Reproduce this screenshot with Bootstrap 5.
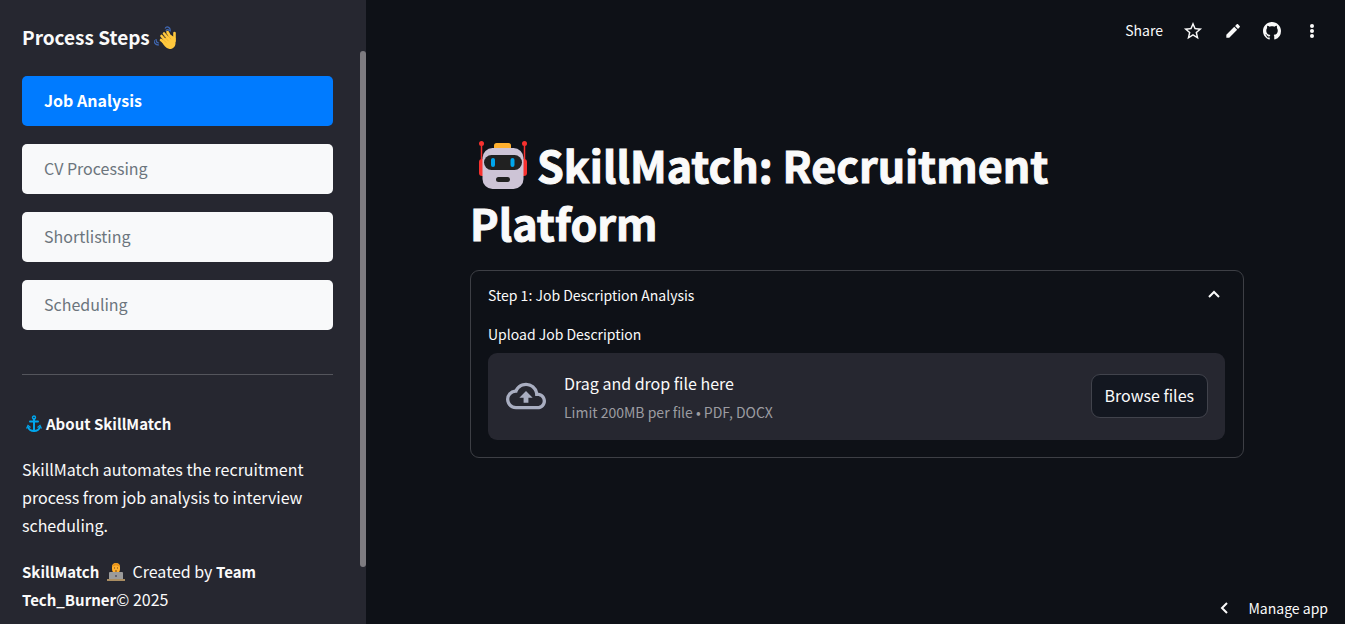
<!DOCTYPE html>
<html lang="en">
<head>
<meta charset="utf-8">
<meta name="viewport" content="width=device-width, initial-scale=1">
<title>SkillMatch: Recruitment Platform</title>
<link href="https://cdn.jsdelivr.net/npm/bootstrap@5.3.0/dist/css/bootstrap.min.css" rel="stylesheet">
<style>
body { background: #0e1117; color: #fafafa; font-family: "Noto Sans CJK JP", "Noto Sans", sans-serif; font-size: 16px; line-height: 28px; }
.side { flex: 0 0 366px; background: #262730; padding: 23px 33px 6px 22px; }
.side h2 { font-size: 19px; line-height: 28px; font-weight: 700; margin-bottom: 25px; }
.side h2 svg { vertical-align: -5px; }
.side p { margin-bottom: 18px; }
.side p svg { vertical-align: -3px; }
.side hr { margin: 44px 0 34px; border-color: #54555c; opacity: 1; }
.side strong { font-weight: 700; font-size: 15px; line-height: 20px; }
.thumb { top: 51px; bottom: 57px; width: 6px; background: #7d7b80; border-radius: 3px; }
.steps { gap: 18px; }
.step { height: 50px; border: 0; border-radius: 5px; background: #f8f9fa; color: #6c757d; padding: 0 22px 2px; }
.step.active { background: #007bff; color: #fff; font-weight: 700; }
.tools { gap: 20px; padding: 20px 24px 0; height: 42px; }
.tools, .small-text { font-size: 14px; line-height: 22px; }
.plain { border: 0; background: none; color: inherit; padding: 0; }
.tools .plain:first-child { padding-bottom: 2px; }
.content-area { padding: 93px 101px 0 104px; }
h1 { font-size: 43px; line-height: 58px; font-weight: 700; margin-bottom: 19px; -webkit-text-stroke: 1px #fafafa; }
h1 .robot { margin: 0 9px 0 8px; vertical-align: -7px; -webkit-text-stroke: 0; }
.panel { border: 1px solid #3d3f45; border-radius: 9px; padding: 13px 18px 17px 17px; }
.toggle { margin-bottom: 17px; padding-right: 1px; }
.drop { background: #262730; border-radius: 9px; height: 87px; padding: 0 17px 1px 18px; gap: 18px; margin-top: 8px; }
.drop-text { gap: 4px; padding-bottom: 1px; }
.muted { color: #9c9ca1; }
.browse { height: 44px; border: 1px solid #41434c; border-radius: 9px; background: #131720; color: #fafafa; padding: 0 13px 2px; }
.manage { gap: 18px; padding: 0 17px 5px; }
</style>
</head>
<body>
<div class="d-flex min-vh-100">
  <aside class="side position-relative">
    <h2>Process Steps <svg width="24" height="24" viewBox="1 0 24 24" aria-hidden="true"><g fill="none" stroke="#4169b5" stroke-width="1.2"><path d="M12 2.500c2-3 6-1 5 3M13 5c0-2 3-2 3 0M1 14c0 3 2 5 5 5M3 13c0 3 1 4 3 4"/></g><path d="M8.500 10l6 7M11 7.500l6 7M14.500 6l4 7M8 14l6 5M21.500 7v8" stroke="#ffc83d" stroke-width="2.600" stroke-linecap="round"/><path d="M9 14l9-5 4.500 3v5c0 4-3 6-6 6-4-1-6-4-7.500-7z" fill="#ffc83d"/><path d="M9.500 11l5 5.500M12 8.500l5 6M8.500 14.500l4 3.500" stroke="#e5a22b" stroke-width=".6" transform="translate(1 -1.300)"/></svg></h2>
    <nav class="steps d-flex flex-column" aria-label="Process steps">
      <button type="button" class="step active text-start">Job Analysis</button>
      <button type="button" class="step text-start">CV Processing</button>
      <button type="button" class="step text-start">Shortlisting</button>
      <button type="button" class="step text-start">Scheduling</button>
    </nav>
    <hr>
    <p><svg class="ms-1 me-1" width="16" height="18" viewBox="0 0 16 18" fill="none" stroke="#00a6ed" stroke-width="2" aria-hidden="true"><circle cx="8" cy="2.500" r="1.500" stroke-width="1.400"/><path d="M8 4v12M4 6.500h8" stroke-linecap="round"/><path d="M2 12c1 3 3 4 6 4s5-1 6-4"/><path d="M.5 13.500L2 10.500l2.500 2M15.500 13.500L14 10.500l-2.500 2" stroke-width="1.200"/></svg><strong>About SkillMatch</strong></p>
    <p>SkillMatch automates the recruitment process from job analysis to interview scheduling.</p>
    <p class="mb-0"><strong>SkillMatch</strong> <svg class="ms-1 me-1" width="18" height="18" viewBox="0 0 18 18" aria-hidden="true"><path d="M3 17c0-6 2-7 6-7s6 1 6 7z" fill="#e9b949"/><rect x="5" y="0" width="8" height="10" rx="4" fill="#ffb02e"/><path d="M5 4c1-5 7-5 8 0-3-2-5-2-8 0z" fill="#e89218"/><path d="M7 5h1M10 5h1M8 8h2" stroke="#704216"/><rect x="2" y="9" width="14" height="8" rx="1" fill="#9b9b9b"/><rect x="0" y="16" width="18" height="2" fill="#a98d62"/><circle cx="9" cy="13" r="1" fill="#55505f"/></svg> Created by <strong>Team Tech_Burner</strong>© 2025</p>
    <div class="thumb position-absolute end-0"></div>
  </aside>
  <div class="flex-grow-1 d-flex flex-column">
    <header class="tools d-flex justify-content-end align-items-center">
      <button type="button" class="plain">Share</button>
      <button type="button" class="plain d-flex" aria-label="Favorite"><svg width="20" height="20" viewBox="1 1 22 22" fill="currentColor"><path d="M22 9.240l-7.190-.62L12 2 9.190 8.630 2 9.240l5.460 4.730L5.820 21 12 17.270 18.180 21l-1.630-7.030L22 9.240zM12 15.400l-3.760 2.270 1-4.280-3.320-2.880 4.380-.38L12 6.100l1.710 4.040 4.380.38-3.320 2.880 1 4.280L12 15.400z"/></svg></button>
      <button type="button" class="plain d-flex" aria-label="Edit"><svg width="20" height="20" viewBox="0 0 24 24" fill="currentColor"><path d="M4 16.500V20h3.500L17 10.500 13.500 7zM20 7.500c.5-.5.5-1 0-1.500l-2-2c-.5-.5-1-.5-1.500 0l-2 2L18 9.500z"/></svg></button>
      <button type="button" class="plain d-flex" aria-label="GitHub"><svg width="18" height="18" viewBox="0 0 16 16" fill="currentColor"><path d="M8 0C3.580 0 0 3.580 0 8c0 3.540 2.290 6.530 5.470 7.590.4.070.55-.17.55-.38 0-.19-.01-.82-.01-1.490-2.010.37-2.530-.49-2.690-.94-.09-.23-.48-.94-.82-1.130-.28-.15-.68-.52-.01-.53.63-.01 1.080.58 1.230.82.72 1.210 1.870.87 2.330.66.07-.52.28-.87.51-1.070-1.780-.2-3.640-.89-3.640-3.950 0-.87.31-1.590.82-2.150-.08-.2-.36-1.020.08-2.120 0 0 .67-.21 2.200.82.64-.18 1.320-.27 2-.27s1.360.09 2 .27c1.530-1.040 2.200-.82 2.200-.82.44 1.100.16 1.920.08 2.120.51.56.82 1.270.82 2.150 0 3.070-1.870 3.750-3.650 3.950.29.25.54.73.54 1.480 0 1.070-.01 1.930-.01 2.200 0 .21.15.46.55.38A8.010 8.010 0 0016 8c0-4.420-3.580-8-8-8z"/></svg></button>
      <button type="button" class="plain d-flex" aria-label="More options"><svg width="20" height="20" viewBox="0 0 20 20" fill="currentColor"><circle cx="11" cy="5" r="2"/><circle cx="11" cy="10" r="2"/><circle cx="11" cy="15" r="2"/></svg></button>
    </header>
    <main class="content-area flex-grow-1">
      <h1><svg class="robot" width="50" height="49" viewBox="8 7 50 49" aria-hidden="true"><path d="M11.500 10v18M54.500 10v18" stroke="#f8312f" stroke-width="1.500"/><g fill="#f8312f"><circle cx="11.500" cy="9.500" r="2.500"/><circle cx="54.500" cy="9.500" r="2.500"/><rect x="9" y="25" width="8" height="17" rx="3"/><rect x="49" y="25" width="8" height="17" rx="3"/></g><rect x="24" y="9" width="17" height="7" rx="2.500" fill="#ffb02e"/><rect x="12.500" y="14" width="41" height="41" rx="10" fill="#cdc4d6"/><rect x="14" y="21" width="38" height="15" rx="7.500" fill="#212121"/><rect x="21" y="24" width="4" height="9" rx="2" fill="#00a6ed"/><rect x="40.500" y="24" width="4" height="9" rx="2" fill="#00a6ed"/><rect x="26" y="43" width="14" height="5" rx="2.500" fill="#212121"/></svg>SkillMatch: Recruitment Platform</h1>
      <section class="panel">
        <button type="button" class="toggle plain small-text w-100 d-flex justify-content-between align-items-center" aria-expanded="true">Step 1: Job Description Analysis<svg width="20" height="20" viewBox="0 0 20 20" fill="none" stroke="currentColor" stroke-width="2" aria-hidden="true"><path d="M5 12l5-5 5 5"/></svg></button>
        <label class="small-text d-block" for="browse">Upload Job Description</label>
        <div class="drop d-flex align-items-center">
          <svg width="40" height="40" viewBox="0 0 24 24" fill="#a9aec1" aria-hidden="true"><path d="M19.350 10.040A7.490 7.490 0 0012 4C9.110 4 6.600 5.640 5.350 8.040A5.994 5.994 0 000 14c0 3.310 2.690 6 6 6h13c2.760 0 5-2.240 5-5 0-2.640-2.050-4.780-4.650-4.960zM19 18H6c-2.210 0-4-1.790-4-4s1.790-4 4-4h.71C7.370 7.690 9.480 6 12 6c3.040 0 5.500 2.460 5.500 5.500v.5H19c1.660 0 3 1.340 3 3s-1.340 3-3 3zM8 13h2.550v3h2.900v-3H16l-4-4z"/></svg>
          <div class="drop-text flex-grow-1 d-flex flex-column">
            <div>Drag and drop file here</div>
            <div class="small-text muted">Limit 200MB per file • PDF, DOCX</div>
          </div>
          <button type="button" class="browse" id="browse">Browse files</button>
        </div>
      </section>
    </main>
    <footer class="d-flex justify-content-end">
      <button type="button" class="manage plain small-text d-flex align-items-center"><svg width="16" height="16" viewBox="0 0 16 16" fill="none" stroke="currentColor" stroke-width="2" aria-hidden="true"><path d="M12 3L7 8l5 5"/></svg>Manage app</button>
    </footer>
  </div>
</div>
<script src="https://cdn.jsdelivr.net/npm/bootstrap@5.3.0/dist/js/bootstrap.bundle.min.js"></script>
</body>
</html>
